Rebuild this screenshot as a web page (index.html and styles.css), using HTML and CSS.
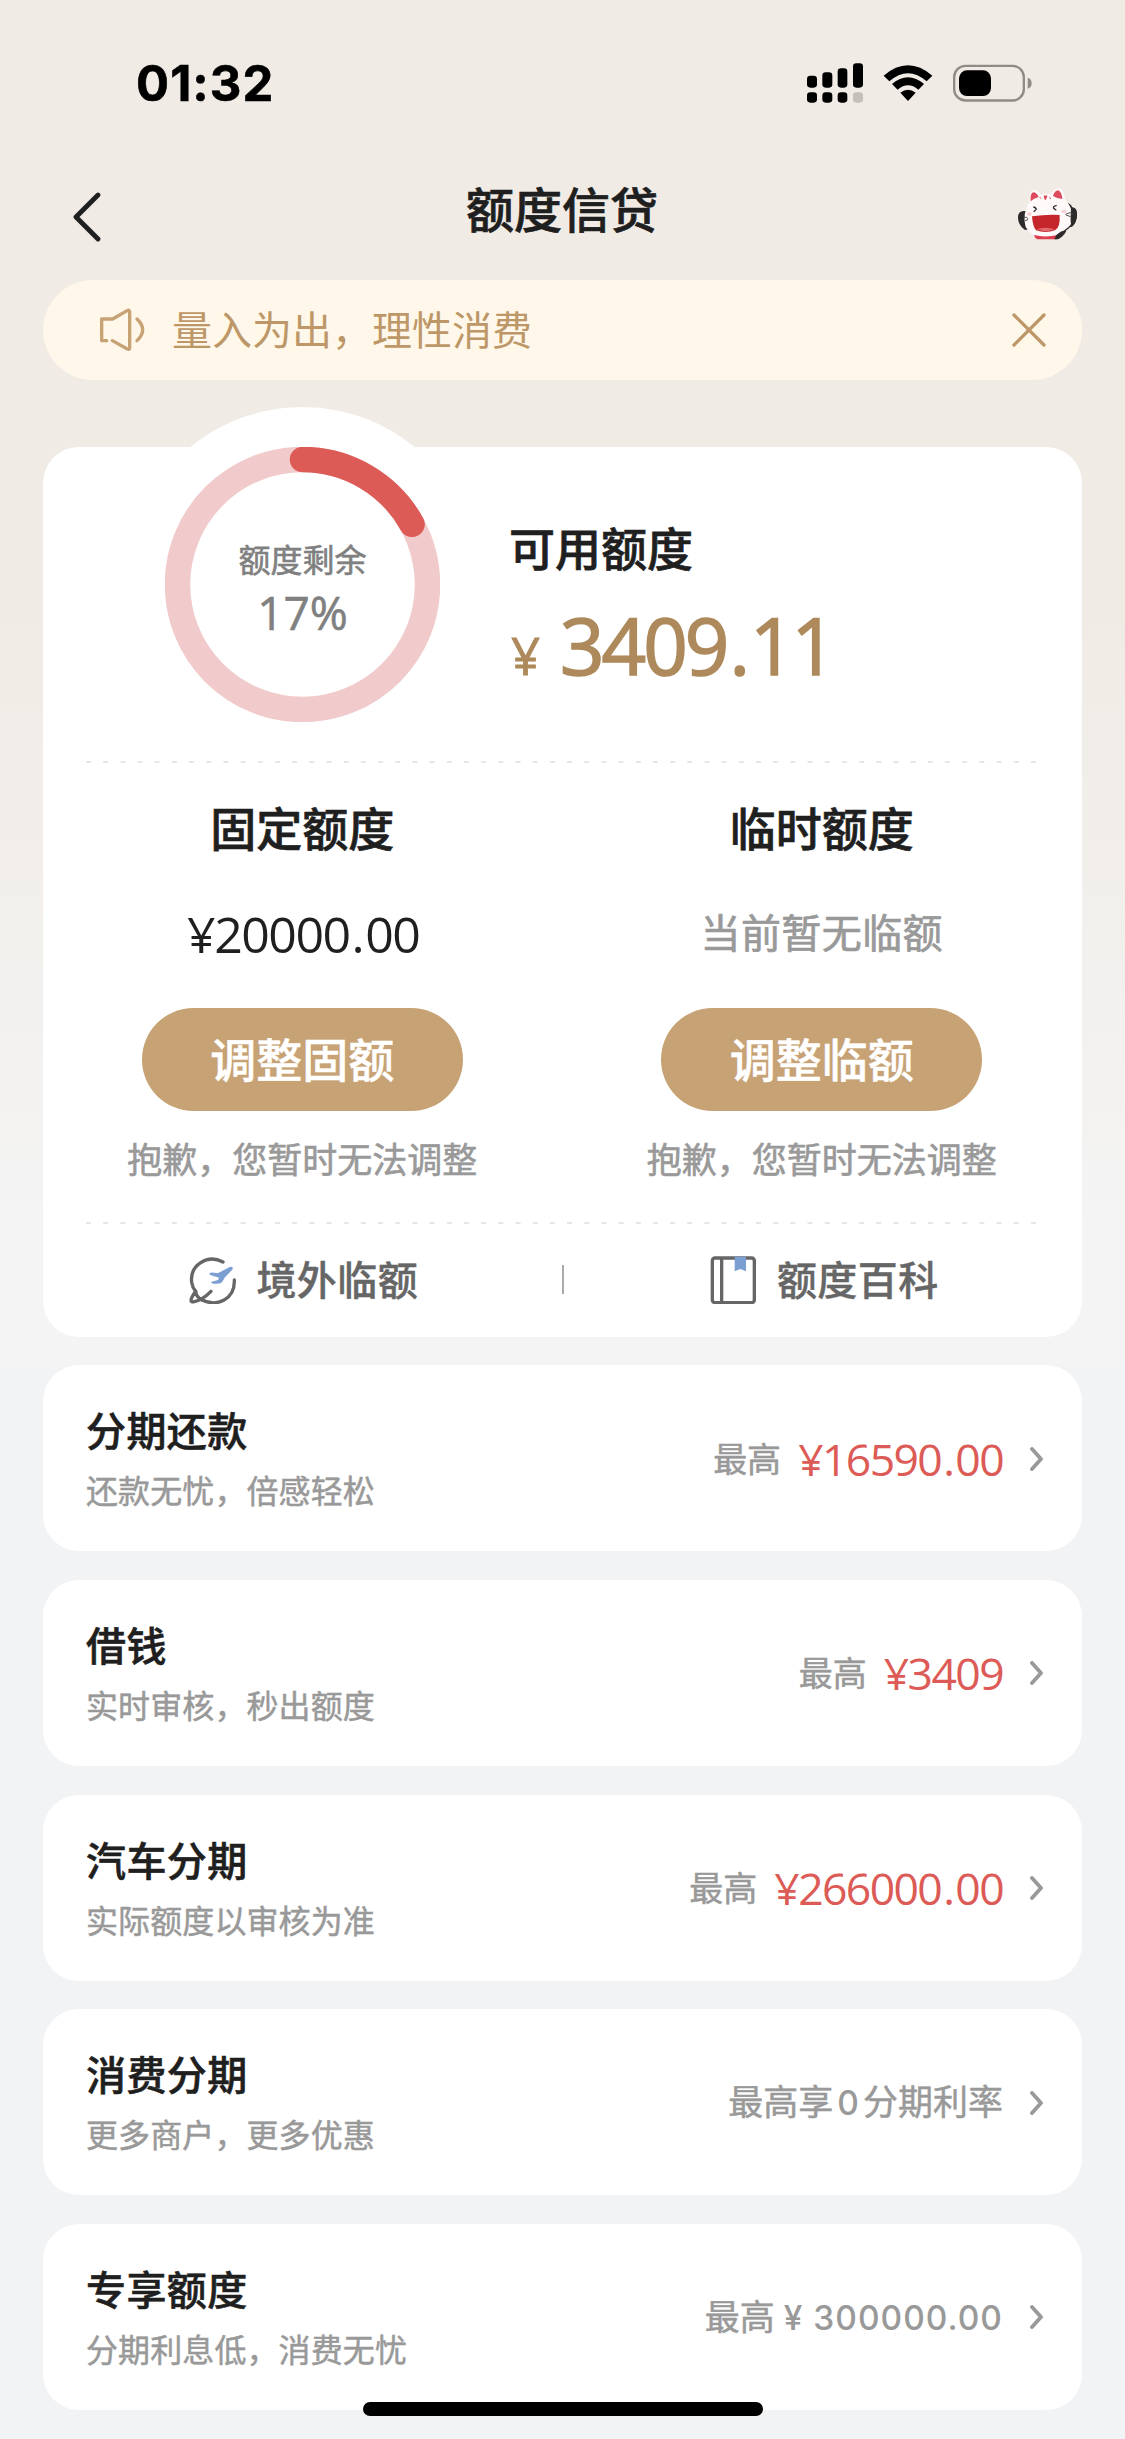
FILE: index.html
```html
<!DOCTYPE html>
<html lang="zh-CN">
<head>
<meta charset="utf-8">
<title>额度信贷</title>
<link rel="stylesheet" href="styles.css">
</head>
<body>
<div class="page">
  <header class="status">
    <span class="clock">01:32</span>
    <svg class="status-icons" viewBox="81 70 675 120">
      <rect x="81" y="108" width="30" height="36" rx="10"/>
      <rect x="127" y="98" width="30" height="46" rx="10"/>
      <rect x="173" y="86" width="29" height="58" rx="10"/>
      <rect x="219" y="71" width="30" height="73" rx="10"/>
      <rect x="81" y="158" width="30" height="31" rx="10"/>
      <rect x="127" y="158" width="30" height="31" rx="10"/>
      <rect x="173" y="158" width="29" height="31" rx="10"/>
      <rect x="219" y="158" width="30" height="31" rx="10" fill="#c3c0bc"/>
      <path d="M311 108Q384 46 457 108L440 125Q384 76 328 125Z"/>
      <path d="M336 133Q384 93 432 133L415 150Q384 124 353 150Z"/>
      <path d="M361 159Q384 141 407 159L384 184Z"/>
      <rect x="522.500" y="78.500" width="209" height="104" rx="34" fill="none" stroke="#8f8c88" stroke-width="7"/>
      <rect x="537" y="92" width="96" height="77" rx="24"/>
      <path d="M743 114Q755 118 755 130.500T743 147Z" fill="#8f8c88"/>
    </svg>
  </header>

  <nav class="nav">
    <svg class="back" viewBox="0 0 30 50"><path d="M26 3 4 25 26 47"/></svg>
    <h1>额度信贷</h1>
    <svg class="mascot" viewBox="713 443 177 156">
      <path d="M862 490Q872 494 874 504" fill="none" stroke="#2d2a2b" stroke-width="5"/>
      <path d="M733 512Q713 510 713 532T733 568H746V512Z" fill="#2d2a2b"/>
      <path d="M866 502Q890 496 890 522T874 560H860Z" fill="#2d2a2b"/>
      <path d="M747 484Q747 448 763 449Q776 452 781 463Q797 458 812 461Q820 446 836 444Q849 447 855 478Q880 505 876 540Q872 568 846 583Q826 594 790 592Q750 588 736 560Q725 520 747 484Z" fill="#fffafa"/>
      <path d="M872 502Q890 500 890 522T876 558Q870 555 871 530Z" fill="#2d2a2b"/>
      <path d="M751 480Q749 455 762 456Q771 459 775 470Q760 474 751 483Z" fill="#dd4a5b"/>
      <path d="M818 467Q823 451 834 450Q844 455 846 476Q833 476 818 467Z" fill="#dd4a5b"/>
      <path d="M791 467L795 478L800 467ZM778 470L782 475M807 472L812 475" fill="#dd4a5b" stroke="#dd4a5b" stroke-width="3"/>
      <path d="M759 500Q770 503 767 508L760 514M829 495Q817 498 820 504L828 510" fill="none" stroke="#2d2a2b" stroke-width="4"/>
      <path d="M730 532q10-4 12 2t-9 8M855 522l14-5 8 4M857 524l14 5" fill="none" stroke="#574e50" stroke-width="3"/>
      <ellipse cx="747" cy="521" rx="7" ry="5" fill="#f8cdd2"/><ellipse cx="851" cy="513" rx="8" ry="5" fill="#f8cdd2"/>
      <path d="M755 528Q796 522 838 524Q840 562 824 570Q796 580 767 570Q757 558 755 528Z" fill="#c5262b"/>
      <path d="M769 567Q795 558 823 567Q796 578 769 567Z" fill="#e06b6c"/>
      <path d="M762 584Q795 593 835 583L828 597H771Q762 593 762 584Z" fill="#dd3f50"/>
      <path d="M876 550Q866 564 851 573" fill="none" stroke="#2d2a2b" stroke-width="4"/>
      <path d="M828 584Q845 568 858 572Q850 588 833 597H822Z" fill="#2d2a2b"/>
    </svg>
  </nav>

  <div class="notice">
    <svg class="speaker" viewBox="42 40 144 132"><path d="M65 138H50V73H83L128 47Q134 45 134 52V160Q134 166 127 163L82 138M156 73Q190 105 156 138"/></svg>
    <span>量入为出，理性消费</span>
    <svg class="close" viewBox="0 0 34 34"><path d="M2 2 32 32M32 2 2 32"/></svg>
  </div>

  <main class="limit">
    <section class="summary">
      <div class="gauge">
        <svg class="ring" viewBox="0 0 275 275">
          <circle cx="137.500" cy="137.500" r="125" stroke="#f1cbcb"/>
          <circle cx="137.500" cy="137.500" r="125" stroke="#dc5b56" stroke-linecap="round" pathLength="100" stroke-dasharray="17 83" transform="rotate(-90 137.500 137.500)"/>
        </svg>
        <div class="gauge-text"><span>额度剩余</span><b>17%</b></div>
      </div>
      <div class="available">
        <h2>可用额度</h2>
        <p class="balance"><small>¥</small><span>3409<i>.</i>11</span></p>
      </div>
    </section>
    <svg class="dash" viewBox="0 0 950 2"><path d="M0 1H950"/></svg>
    <section class="columns">
      <div class="column">
        <h2>固定额度</h2>
        <p class="fixed">¥20000<i>.</i>00</p>
        <button>调整固额</button>
        <p class="sorry">抱歉，您暂时无法调整</p>
      </div>
      <div class="column">
        <h2>临时额度</h2>
        <p class="none">当前暂无临额</p>
        <button>调整临额</button>
        <p class="sorry">抱歉，您暂时无法调整</p>
      </div>
    </section>
    <svg class="dash" viewBox="0 0 950 2"><path d="M0 1H950"/></svg>
    <section class="links">
      <a><svg class="link-icon" viewBox="60 45 144 144"><g fill="none" stroke="#666" stroke-width="10" stroke-linecap="round"><path d="M162 63C115 38 62 72 68 124Q70 139 80 151"/><path d="M196 117C198 174 145 200 98 176"/><path d="M80 151C62 176 62 186 76 182Q100 177 126 151M80 151Q80 167 98 176"/></g><path d="M122 96Q126 92 146 97L182 78Q194 74 190 86L168 109L159 124Q151 130 133 128Q123 125 128 122L147 117L150 110L126 103Q120 100 122 96Z" fill="#7b9fd0"/></svg><span>境外临额</span></a>
      <hr>
      <a><svg class="link-icon" viewBox="60 45 144 144"><g fill="none" stroke="#666" stroke-width="10"><rect x="67" y="51" width="126" height="134" rx="8"/><path d="M95 51V185"/></g><path d="M134 47H168V91L151 84L134 91Z" fill="#7b9fd0"/></svg><span>额度百科</span></a>
    </section>
  </main>

  <ul class="products">
    <li><div><h3>分期还款</h3><p>还款无忧，倍感轻松</p></div><span class="tag">最高</span><span class="amount">¥16590<i>.</i>00</span><svg class="go" viewBox="0 0 14 24"><path d="M3 2 12 12 3 22"/></svg></li>
    <li><div><h3>借钱</h3><p>实时审核，秒出额度</p></div><span class="tag">最高</span><span class="amount">¥3409</span><svg class="go" viewBox="0 0 14 24"><path d="M3 2 12 12 3 22"/></svg></li>
    <li><div><h3>汽车分期</h3><p>实际额度以审核为准</p></div><span class="tag">最高</span><span class="amount">¥266000<i>.</i>00</span><svg class="go" viewBox="0 0 14 24"><path d="M3 2 12 12 3 22"/></svg></li>
    <li><div><h3>消费分期</h3><p>更多商户，更多优惠</p></div><span class="tag plain">最高享<b class="zero">0</b>分期利率</span><svg class="go" viewBox="0 0 14 24"><path d="M3 2 12 12 3 22"/></svg></li>
    <li><div><h3>专享额度</h3><p>分期利息低，消费无忧</p></div><span class="tag plain">最高<b class="max">¥ 300000.00</b></span><svg class="go" viewBox="0 0 14 24"><path d="M3 2 12 12 3 22"/></svg></li>
  </ul>
  <div class="home-bar"></div>
</div>
</body>
</html>
```
FILE: styles.css
```css
* { box-sizing: border-box; margin: 0; padding: 0; }
body { font-family: "Noto Sans CJK SC", sans-serif; background: #f2f3f5; color: #1f1f1f; }
svg { display: block; flex: none; }
i, b { font-style: normal; }
.page {
  position: relative; width: 1125px; height: 2439px; overflow: hidden; padding: 0 43px;
  background: linear-gradient(#f0ebe5 0, #f0ebe5 620px, #f4f4f4 1230px, #f4f4f4 1365px, #f2f3f5 1365px);
}
.status { height: 168px; padding: 63px 50px 0 93px; display: flex; justify-content: space-between; align-items: flex-start; }
.clock { font: 700 49px/42px Inter, sans-serif; letter-spacing: 1.1px; color: #000; -webkit-text-stroke: 0.6px #000; }
.status-icons { width: 225px; height: 40px; }
.nav { height: 112px; display: grid; grid-template-columns: 60px 1fr 60px; align-items: start; margin: 0 4px 0 30px; }
.nav h1 { font-size: 48px; font-weight: 500; line-height: 60px; text-align: center; padding: 9px 27px 0 0; -webkit-text-stroke: 0.7px #1f1f1f; }
.back { width: 30px; height: 50px; margin: 24px 0 0 -1px; }
.back path { fill: none; stroke: #1f1f1f; stroke-width: 4.8; stroke-linecap: round; stroke-linejoin: round; }
.mascot { width: 59px; height: 52px; margin-top: 20px; }
.notice { height: 100px; border-radius: 50px; background: #fff7e9; display: flex; align-items: center; color: #bd9768; padding: 0 36px 0 56px; font-size: 40px; line-height: 60px; }
.notice span { margin: -4px 0 0 25px; flex: 1; }
.speaker { width: 48px; height: 44px; }
.close { width: 34px; height: 34px; }
.speaker path, .close path { fill: none; stroke: #bd9768; stroke-width: 3.3; stroke-linecap: round; stroke-linejoin: round; }
.speaker path { stroke: #c7a274; stroke-width: 10; }

.limit { position: relative; margin-top: 67px; height: 890px; border-radius: 36px; background: #fff; padding: 0 43px; }
.summary { height: 314px; display: flex; }
.gauge { position: relative; width: 275px; height: 275px; margin-left: 79px; display: flex; flex-direction: column; align-items: center; }
.gauge::before { content: ""; position: absolute; left: -40px; top: -40px; width: 355px; height: 355px; border-radius: 50%; background: #fff; clip-path: inset(0 0 300px 0); }
.ring { position: absolute; inset: 0; width: 275px; height: 275px; }
.ring circle { fill: none; stroke-width: 25.5; }
.gauge-text { display: flex; flex-direction: column; align-items: center; color: #808080; padding-top: 91px; }
.gauge-text span { font-size: 32px; line-height: 40px; -webkit-text-stroke: 0.6px #808080; }
.gauge-text b { font: 500 46px/50px "Open Sans", sans-serif; -webkit-text-stroke: 0.6px #808080; margin-top: 9px; }
.available { padding: 69px 0 0 69px; }
h2 { font-size: 46px; line-height: 60px; font-weight: 500; -webkit-text-stroke: 0.7px #1f1f1f; }
.balance { display: flex; align-items: baseline; color: #ad895b; font-family: "Open Sans", sans-serif; line-height: 90px; margin-top: 24px; -webkit-text-stroke: 1.6px #ad895b; }
.balance small { font-size: 51px; width: 51px; padding-left: 2px; -webkit-text-stroke-width: 0.8px; }
.balance span { font-size: 78px; letter-spacing: -3px; }
.balance i { margin: 0 3px; }
.dash { width: 950px; height: 2px; }
.dash path { stroke: #e6e6e6; stroke-width: 2; stroke-dasharray: 5 12.18; }
.columns { display: grid; grid-template-columns: 1fr 1fr; height: 459px; margin: 0 -43px; }
.column { display: flex; flex-direction: column; align-items: center; padding: 33px 1px 0 0; }
.fixed { font: 400 50px/60px "Open Sans", sans-serif; letter-spacing: -1.5px; height: 60px; margin-top: 48px; padding-left: 2px; }
.fixed i, .amount i { margin: 0 2px; }
.none { font-size: 40px; line-height: 60px; margin: 45px 0 3px; letter-spacing: 0.4px; color: #999; -webkit-text-stroke: 0.7px #999; }
button { width: 321px; height: 103px; border: 0; border-radius: 52px; background: #c7a274; color: #fff; font: 500 46px/60px "Noto Sans CJK SC", sans-serif; margin-top: 44px; padding-bottom: 5px; -webkit-text-stroke: 0.5px #fff; }
.sorry { font-size: 35px; line-height: 50px; color: #999; margin-top: 22px; -webkit-text-stroke: 0.6px #999; }
.links { display: grid; grid-template-columns: 1fr 2px 1fr; align-items: center; height: 113px; margin: 0 -43px; }
.links a { display: flex; align-items: center; justify-content: center; gap: 19px; font-size: 40px; letter-spacing: 0.4px; font-weight: 500; color: #666; padding: 0 0 2px 3px; -webkit-text-stroke: 0.4px #666; }
.links a span { margin-top: -4px; }
.links hr { width: 2px; height: 29px; border: 0; background: #aaa; margin-bottom: 3px; }
.link-icon { width: 48px; height: 48px; }

.products { list-style: none; margin-top: 28.3px; display: grid; gap: 28.67px; }
.products li { height: 186px; border-radius: 36px; background: #fff; display: flex; align-items: center; padding: 0 39px 0 43px; }
.products li div { flex: 1; padding-top: 2px; }
h3 { font-size: 40px; letter-spacing: 0.4px; line-height: 60px; font-weight: 500; -webkit-text-stroke: 0.6px #1f1f1f; }
.products p { font-size: 32px; line-height: 60px; color: #999; letter-spacing: 0.1px; -webkit-text-stroke: 0.5px #999; }
.tag { font-size: 34px; line-height: 50px; color: #999; -webkit-text-stroke: 0.5px #999; margin-top: -1px; }
.plain { font-size: 35px; margin-right: 26px; }
.amount { font: 400 44.5px/60px "Open Sans", sans-serif; letter-spacing: -1.6px; color: #dc5b56; margin: 1px 26px 0 17px; }
.zero, .max { font: 500 33.500px/50px Inter, sans-serif; letter-spacing: 1px; -webkit-text-stroke: 0; }
.zero { margin: 0 3px 0 4px; }
.max { margin-left: 9px; }
.go { width: 14px; height: 24px; margin-top: 1px; }
.go path { fill: none; stroke: #999; stroke-width: 3.800; stroke-linecap: round; stroke-linejoin: round; }
.home-bar { position: absolute; left: 363px; top: 2402px; width: 400px; height: 14px; border-radius: 7px; background: #000; }
```
